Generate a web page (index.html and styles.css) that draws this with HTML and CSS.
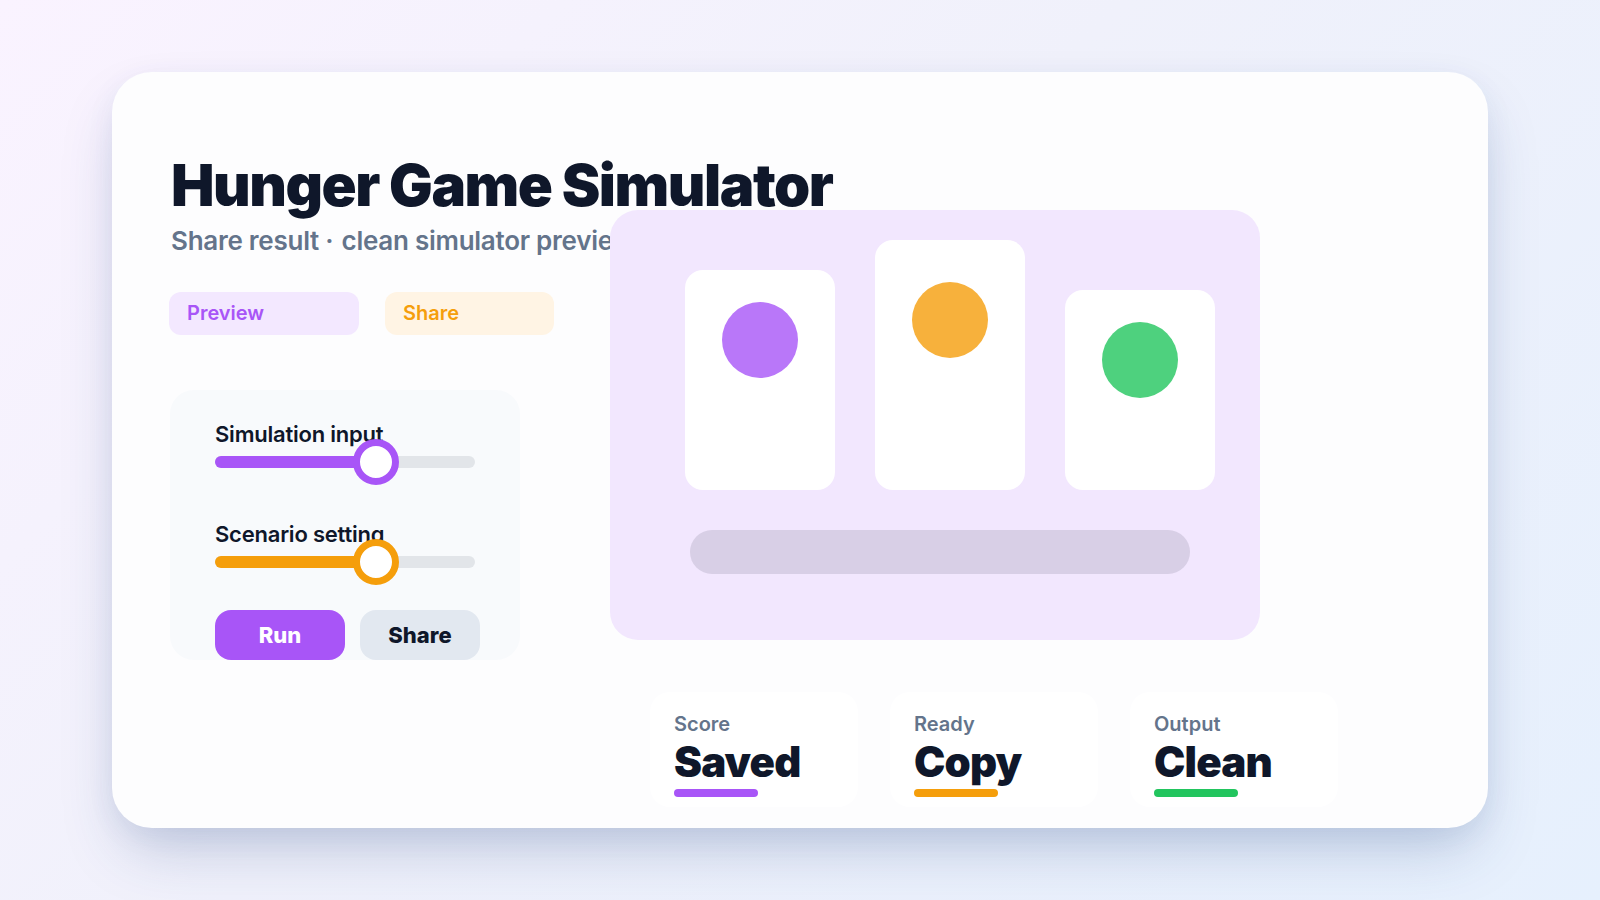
FILE: index.html
```html
<!DOCTYPE html>
<html lang="en">
<head>
<meta charset="utf-8">
<title>Hunger Game Simulator</title>
<link rel="stylesheet" href="styles.css">
</head>
<body>
<div class="card">
  <h1 class="title">Hunger Game Simulator</h1>
  <p class="subtitle">Share result · &#8202;clean simulator preview</p>
  <div class="main">
    <div class="left">
      <div class="pills">
        <span class="pill pill-purple">Preview</span>
        <span class="pill pill-orange">Share</span>
      </div>
      <div class="controls">
        <div class="slider">
          <div class="slider-label">Simulation input</div>
          <div class="track">
            <div class="fill fill-purple"></div>
            <div class="thumb thumb-purple"></div>
          </div>
        </div>
        <div class="slider">
          <div class="slider-label">Scenario setting</div>
          <div class="track">
            <div class="fill fill-orange"></div>
            <div class="thumb thumb-orange"></div>
          </div>
        </div>
        <div class="buttons">
          <button class="btn btn-run">Run</button>
          <button class="btn btn-share">Share</button>
        </div>
      </div>
    </div>
    <div class="right">
      <div class="panel">
        <div class="tiles">
          <div class="tile tile-1"><span class="dot dot-purple"></span></div>
          <div class="tile tile-2"><span class="dot dot-orange"></span></div>
          <div class="tile tile-3"><span class="dot dot-green"></span></div>
        </div>
        <div class="bar"></div>
      </div>
      <div class="stats">
        <div class="stat">
          <div class="stat-label">Score</div>
          <div class="stat-value">Saved</div>
          <div class="stat-line line-purple"></div>
        </div>
        <div class="stat">
          <div class="stat-label">Ready</div>
          <div class="stat-value">Copy</div>
          <div class="stat-line line-orange"></div>
        </div>
        <div class="stat">
          <div class="stat-label">Output</div>
          <div class="stat-value">Clean</div>
          <div class="stat-line line-green"></div>
        </div>
      </div>
    </div>
  </div>
</div>
</body>
</html>
```
FILE: styles.css
```css
html, body {
  margin: 0;
  height: 900px;
  overflow: hidden;
}

body {
  font-family: Inter, "Noto Sans", "Liberation Sans", sans-serif;
  background: linear-gradient(135deg, #faf3ff 0%, #f0f1fb 45%, #e6f0fd 100%);
  padding-top: 72px;
  box-sizing: border-box;
}

.card {
  box-sizing: border-box;
  width: 1376px;
  height: 756px;
  margin: 0 auto;
  padding: 82px 56px 0;
  border-radius: 40px;
  background: #fdfdfe;
  box-shadow: 0 30px 60px -12px rgba(40, 70, 130, 0.25), 0 8px 30px rgba(40, 70, 130, 0.06);
}

.title {
  margin: 0 0 0 3px;
  font-size: 58px;
  line-height: 1.1;
  font-weight: 900;
  letter-spacing: -0.025em;
  color: #0f172a;
}

.subtitle {
  margin: 6px 0 0 3px;
  font-size: 26px;
  line-height: 1.3;
  font-weight: 600;
  color: #64748b;
  white-space: nowrap;
  letter-spacing: -0.01em;
}

.main {
  display: flex;
  margin-top: 34px;
}

.left {
  flex: none;
  width: 442px;
}

.pills {
  display: flex;
  gap: 26px;
  padding-left: 1px;
}

.pill {
  box-sizing: border-box;
  height: 43px;
  display: flex;
  align-items: center;
  padding-left: 18px;
  border-radius: 12px;
  font-size: 20px;
  font-weight: 600;
}

.pill-purple {
  width: 190px;
  background: #f3e8ff;
  color: #a855f7;
}

.pill-orange {
  width: 169px;
  background: #fff4e4;
  color: #f59e0b;
}

.controls {
  box-sizing: border-box;
  width: 350px;
  height: 270px;
  margin: 55px 0 0 2px;
  padding: 32px 45px 0 45px;
  background: #f8fafc;
  border-radius: 24px;
  overflow: hidden;
}

.slider-label {
  font-size: 22px;
  line-height: 24px;
  font-weight: 600;
  letter-spacing: -0.01em;
  color: #0f172a;
}

.slider + .slider {
  margin-top: 54px;
}

.track {
  position: relative;
  height: 12px;
  margin-top: 10px;
  border-radius: 6px;
  background: #e2e5e9;
}

.fill {
  width: 62%;
  height: 100%;
  border-radius: 6px;
}

.fill-purple { background: #a855f7; }
.fill-orange { background: #f59e0b; }

.thumb {
  position: absolute;
  left: 62%;
  top: 50%;
  box-sizing: border-box;
  width: 46px;
  height: 46px;
  border: 7px solid;
  border-radius: 50%;
  background: #fff;
  transform: translate(-50%, -50%);
}

.thumb-purple { border-color: #a855f7; }
.thumb-orange { border-color: #f59e0b; }

.buttons {
  display: flex;
  gap: 15px;
  margin-top: 42px;
}

.btn {
  flex: none;
  height: 50px;
  border: 0;
  border-radius: 16px;
  font-family: inherit;
  font-size: 22px;
  font-weight: 800;
  padding: 0;
}

.btn-run {
  width: 130px;
  background: #a855f7;
  color: #fff;
}

.btn-share {
  width: 120px;
  background: #e2e8f0;
  color: #0f172a;
}

.right {
  flex: none;
  width: 728px;
}

.panel {
  position: relative;
  box-sizing: border-box;
  width: 650px;
  height: 430px;
  margin-top: -82px;
  padding: 30px 45px 0 75px;
  background: #f2e7fe;
  border-radius: 28px;
}

.tiles {
  display: flex;
  align-items: flex-end;
  gap: 40px;
  height: 250px;
}

.tile {
  width: 150px;
  background: #fff;
  border-radius: 18px;
  display: flex;
  justify-content: center;
  align-items: flex-start;
}

.tile-1 { height: 220px; }
.tile-2 { height: 250px; }
.tile-3 { height: 200px; }

.dot {
  width: 76px;
  height: 76px;
  margin-top: 32px;
  border-radius: 50%;
}

.tile-2 .dot { margin-top: 42px; }

.dot-purple { background: #b977f9; }
.dot-orange { background: #f7b13c; }
.dot-green { background: #4ed17e; }

.bar {
  width: 500px;
  height: 44px;
  margin: 40px 0 0 5px;
  border-radius: 22px;
  background: #d8cfe6;
}

.stats {
  display: grid;
  grid-template-columns: repeat(3, 208px);
  gap: 32px;
  margin: 52px 0 0 40px;
}

.stat {
  box-sizing: border-box;
  height: 115px;
  padding: 20px 24px 0;
  background: #fff;
  border-radius: 20px;
}

.stat-label {
  font-size: 20px;
  line-height: 24px;
  font-weight: 600;
  color: #64748b;
}

.stat-value {
  margin-top: 3px;
  font-size: 42px;
  line-height: 1.1;
  font-weight: 900;
  letter-spacing: -0.02em;
  color: #0f172a;
}

.stat-line {
  width: 84px;
  height: 8px;
  margin-top: 4px;
  border-radius: 4px;
}

.line-purple { background: #a855f7; }
.line-orange { background: #f59e0b; }
.line-green { background: #22c55e; }
```
